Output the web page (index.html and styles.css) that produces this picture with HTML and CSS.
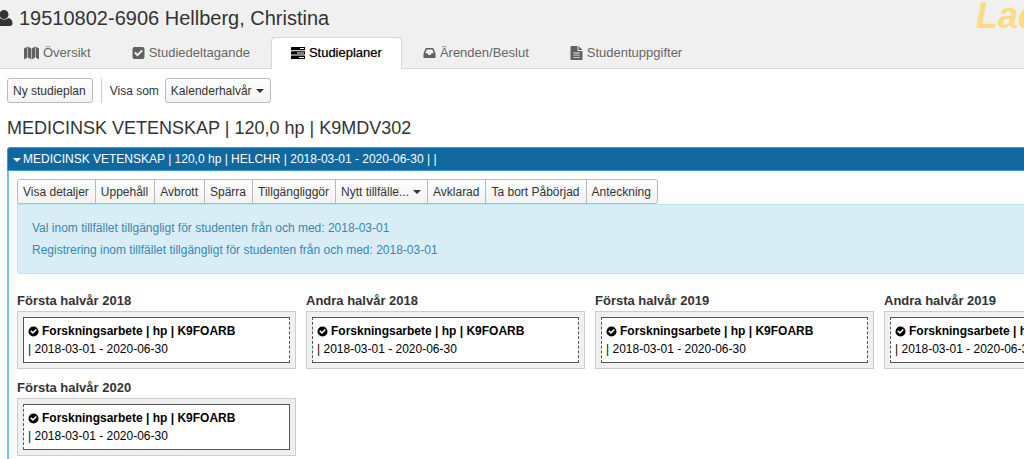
FILE: index.html
```html
<!DOCTYPE html>
<html lang="sv">
<head>
<meta charset="utf-8">
<title>Ladok – Studieplaner</title>
<link rel="stylesheet" href="styles.css">
</head>
<body>
<svg class="sprite" aria-hidden="true">
  <symbol id="i-check" viewBox="0 0 12 12"><path fill-rule="evenodd" d="M6 0.5a5.5 5.5 0 1 1 0 11a5.5 5.5 0 0 1 0-11zM2.4 5.6L5.4 8.7L9.7 4.4L8.5 3.2L5.4 6.3L3.6 4.5z"/></symbol>
</svg>
<div class="page">
  <header class="header">
    <div class="title-row">
      <h1 class="student">
        <svg class="icon-user" viewBox="0 0 18 18" aria-hidden="true"><circle cx="9" cy="5.500" r="4.500"/><path d="M5 9C2 9.500 1 12 1 14.500C1 16 2 17 3.500 17h11.500c1.500 0 2.500-1 2.500-2.500C17.500 12 16.500 9.500 13.500 9C10.500 11 8 11 5 9z"/></svg>
        19510802-6906 Hellberg, Christina
      </h1>
      <span class="brand">Ladok</span>
    </div>
    <nav class="tabs">
      <a class="tab" href="#oversikt"><svg class="icon icon-wide" viewBox="0 0 15 14" aria-hidden="true"><path d="M0 2.500L3.400 0.500V11.500L0 13.500zM4 0.500L7.200 2.500V13.500L4 11.500zM7.800 2.500L11 0.500V11.500L7.800 13.500zM11.600 0.500L15 2.500V13.500L11.600 11.500z"/></svg>Översikt</a>
      <a class="tab" href="#studiedeltagande"><svg class="icon" viewBox="0 0 12 14" aria-hidden="true"><path fill-rule="evenodd" d="M2 1h8a2 2 0 0 1 2 2v8a2 2 0 0 1-2 2H2a2 2 0 0 1-2-2V3a2 2 0 0 1 2-2zM1.700 7.200L5 10.500L10.400 5.100L9 3.700L5 7.700L3.100 5.800z"/></svg>Studiedeltagande</a>
      <a class="tab tab-active" href="#studieplaner" aria-current="page"><svg class="icon icon-tasks" viewBox="0 0 14 14" aria-hidden="true"><path fill-rule="evenodd" d="M0.500 1h13a.5.5 0 0 1 .5.5v2.300a.5.5 0 0 1-.5.5H.5a.5.5 0 0 1-.5-.5V1.500a.5.5 0 0 1 .5-.5zM9 2v1h4v-1zM.5 5.300h13a.5.5 0 0 1 .5.5v2.300a.5.5 0 0 1-.5.5H.5a.5.5 0 0 1-.5-.5V5.800a.5.5 0 0 1 .5-.5zM6 6.500v1h7v-1zM.5 9.600h13a.5.5 0 0 1 .5.5v2.300a.5.5 0 0 1-.5.5H.5a.5.5 0 0 1-.5-.5v-2.300a.5.5 0 0 1 .5-.5zM8 11v1h5v-1z"/></svg>Studieplaner</a>
      <a class="tab" href="#arenden"><svg class="icon" viewBox="0 0 12 14" aria-hidden="true"><path fill-rule="evenodd" d="M2.800 2h6.400q.6 0 .8.5L12 7.500V11.500q0 .5-.5.5H.5Q0 12 0 11.500V7.500L2 2.500Q2.200 2 2.800 2zM3.200 3.500L1.700 7.300H4L4.800 9h2.400L8 7.300h2.300L8.800 3.500z"/></svg>Ärenden/Beslut</a>
      <a class="tab" href="#uppgifter"><svg class="icon" viewBox="0 0 12 14" aria-hidden="true"><path fill-rule="evenodd" d="M.8 0H7v4.200q0 .8.8.8H12v8.200q0 .8-.8.8H.8Q0 14 0 13.200V.8Q0 0 .8 0zM8 0L12 4H8zM2.800 6.500v.9h6.400v-.9zM2.800 8.700v.9h6.400v-.9zM2.800 10.900v.9h6.400v-.9z"/></svg>Studentuppgifter</a>
    </nav>
  </header>

  <main class="main">
    <div class="toolbar">
      <button class="btn" type="button">Ny studieplan</button>
      <span class="divider"></span>
      <span class="toolbar-label" id="visa-som">Visa som</span>
      <button class="btn" type="button" aria-labelledby="visa-som visa-val" aria-haspopup="true"><span id="visa-val">Kalenderhalvår</span><span class="caret"></span></button>
    </div>

    <h2 class="plan-title">MEDICINSK VETENSKAP | 120,0 hp | K9MDV302</h2>

    <section class="panel">
      <button class="panel-head" type="button" aria-expanded="true"><span class="caret caret-head"></span>MEDICINSK VETENSKAP | 120,0 hp | HELCHR | 2018-03-01 - 2020-06-30 | |</button>
      <div class="panel-body">
        <div class="btn-group">
          <button class="btn" type="button">Visa detaljer</button>
          <button class="btn" type="button">Uppehåll</button>
          <button class="btn" type="button">Avbrott</button>
          <button class="btn" type="button">Spärra</button>
          <button class="btn" type="button">Tillgängliggör</button>
          <button class="btn" type="button" aria-haspopup="true">Nytt tillfälle...<span class="caret"></span></button>
          <button class="btn" type="button">Avklarad</button>
          <button class="btn" type="button">Ta bort Påbörjad</button>
          <button class="btn" type="button">Anteckning</button>
        </div>
        <div class="info">
          <p>Val inom tillfället tillgängligt för studenten från och med: 2018-03-01</p>
          <p>Registrering inom tillfället tillgängligt för studenten från och med: 2018-03-01</p>
        </div>
        <div class="terms">
          <section class="term">
            <h3 class="term-title">Första halvår 2018</h3>
            <div class="term-box"><div class="course open-end"><strong class="course-name"><svg class="icon-check" aria-hidden="true"><use href="#i-check"/></svg>Forskningsarbete | hp | K9FOARB</strong><span>| 2018-03-01 - 2020-06-30</span></div></div>
          </section>
          <section class="term">
            <h3 class="term-title">Andra halvår 2018</h3>
            <div class="term-box"><div class="course open-start open-end"><strong class="course-name"><svg class="icon-check" aria-hidden="true"><use href="#i-check"/></svg>Forskningsarbete | hp | K9FOARB</strong><span>| 2018-03-01 - 2020-06-30</span></div></div>
          </section>
          <section class="term">
            <h3 class="term-title">Första halvår 2019</h3>
            <div class="term-box"><div class="course open-start open-end"><strong class="course-name"><svg class="icon-check" aria-hidden="true"><use href="#i-check"/></svg>Forskningsarbete | hp | K9FOARB</strong><span>| 2018-03-01 - 2020-06-30</span></div></div>
          </section>
          <section class="term">
            <h3 class="term-title">Andra halvår 2019</h3>
            <div class="term-box"><div class="course open-start open-end"><strong class="course-name"><svg class="icon-check" aria-hidden="true"><use href="#i-check"/></svg>Forskningsarbete | hp | K9FOARB</strong><span>| 2018-03-01 - 2020-06-30</span></div></div>
          </section>
          <section class="term">
            <h3 class="term-title">Första halvår 2020</h3>
            <div class="term-box"><div class="course open-start"><strong class="course-name"><svg class="icon-check" aria-hidden="true"><use href="#i-check"/></svg>Forskningsarbete | hp | K9FOARB</strong><span>| 2018-03-01 - 2020-06-30</span></div></div>
          </section>
        </div>
      </div>
    </section>
  </main>
</div>
</body>
</html>
```

FILE: styles.css
```css
* { box-sizing: border-box; }

html { overflow: hidden; }

body {
  margin: 0;
  font-family: "Liberation Sans", Arial, sans-serif;
  font-size: 12px;
  line-height: 18px;
  color: #333;
  background: #fff;
}

h1, h2, h3, p { margin: 0; font-weight: normal; }

.sprite { position: absolute; width: 0; height: 0; }

.page { min-width: 1178px; }

/* Header */
.header {
  background: #f0f0f0;
  border-bottom: 1px solid #d6d6d6;
}

.title-row {
  display: flex;
  justify-content: space-between;
  height: 37px;
  padding-right: 96px;
  padding-bottom: 2px;
}

.student {
  display: flex;
  align-items: center;
  gap: 6px;
  margin-left: -5px;
  font-size: 20px;
  line-height: 36px;
}

.icon-user { width: 18px; height: 18px; fill: #333; }

.brand {
  font-size: 36px;
  line-height: 32px;
  font-weight: bold;
  font-style: italic;
  color: #fbdc86;
}

.tabs { display: flex; gap: 1px; margin-bottom: -1px; padding-left: 4px; }

.tab {
  display: flex;
  align-items: center;
  gap: 4px;
  height: 32px;
  padding: 0 19px 1px;
  border: 1px solid transparent;
  border-bottom: 0;
  border-radius: 4px 4px 0 0;
  font-size: 13px;
  color: #666;
  text-decoration: none;
}

.tab-active {
  background: #fff;
  border-color: #d6d6d6;
  color: #000;
  text-shadow: 0 0 1px #888;
}

.icon { width: 13px; height: 14px; fill: #606060; }
.icon-wide { width: 15px; }
.icon-tasks { width: 14px; fill: #000; }

/* Toolbar */
.main { padding: 9px 7px 0; }

.toolbar { display: flex; align-items: center; }

.btn {
  height: 25px;
  padding: 0 6px 0 5px;
  border: 1px solid #bbb;
  border-radius: 3px;
  background: linear-gradient(#fff, #f2f2f2);
  font: inherit;
  color: #333;
  white-space: nowrap;
}

.divider {
  width: 1px;
  height: 24px;
  margin: 0 8px;
  background: #ccc;
}

.toolbar-label { margin-right: 6px; }

.caret {
  display: inline-block;
  margin-left: 4px;
  border: 4px solid transparent;
  border-top-color: currentColor;
  border-bottom: 0;
  vertical-align: middle;
}

.plan-title {
  margin-top: 13px;
  font-size: 18px;
  line-height: 24px;
}

/* Study plan panel */
.panel {
  margin-top: 7px;
  border-left: 2px solid #7cbce6;
  border-radius: 4px 4px 0 0;
}

.panel-head {
  display: block;
  width: 100%;
  height: 24px;
  margin-left: -2px;
  padding: 0 5px;
  border: 1px solid #3d9ad8;
  border-radius: 3px 3px 0 0;
  background: #11689f;
  font: inherit;
  color: #fff;
  text-align: left;
}

.caret-head { margin: 0 2px 0 0; }

.panel-body { padding: 8px 8px 16px; }

.btn-group { display: flex; }
.btn-group .btn { margin-left: -1px; border-radius: 0; }
.btn-group .btn:first-child { margin-left: 0; border-radius: 3px 0 0 0; }
.btn-group .btn:last-child { border-radius: 0 3px 3px 0; }

.info {
  padding: 12px 14px;
  border: 1px solid #bfe3ee;
  border-radius: 0 0 3px 3px;
  background: #d9edf7;
  line-height: 22px;
  color: #3a87ad;
}

.terms {
  display: grid;
  grid-template-columns: repeat(4, minmax(279px, 1fr));
  gap: 9px 10px;
  margin-top: 17px;
}

.term-title {
  font-size: 13px;
  line-height: 20px;
  font-weight: bold;
}

.term-box {
  padding: 5px;
  border: 1px solid #ccc;
  background: #f0f0f0;
}

.course {
  display: flex;
  flex-direction: column;
  padding: 4px;
  border: 1px solid #555;
  background: #fff;
  color: #000;
}

.open-start { border-left-style: dashed; }
.open-end { border-right-style: dashed; }

.course-name { display: flex; align-items: center; gap: 3px; }

.icon-check { width: 11px; height: 11px; }
```
